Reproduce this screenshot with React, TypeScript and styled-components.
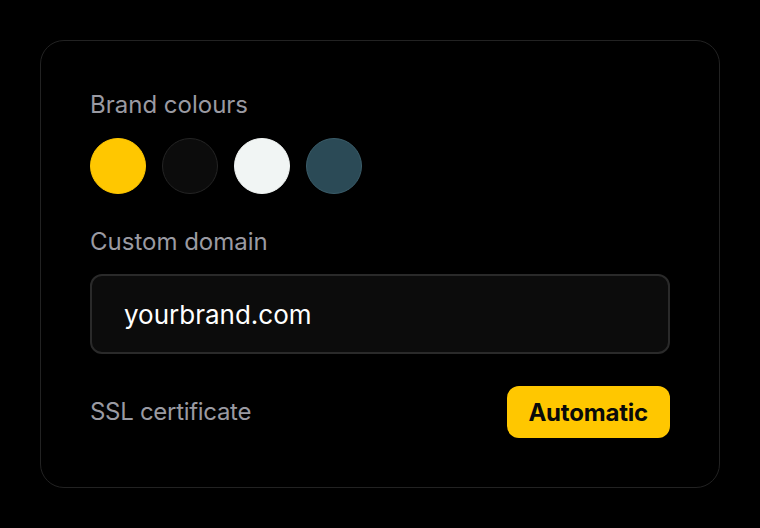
import React from 'react';
import styled, { createGlobalStyle } from 'styled-components';

const GlobalStyle = createGlobalStyle`
  html, body {
    margin: 0;
    padding: 0;
    background: #000000;
  }
  body {
    font-family: Inter, "Noto Sans", sans-serif;
    -webkit-font-smoothing: antialiased;
  }
`;

const Page = styled.div`
  width: 760px;
  height: 528px;
  box-sizing: border-box;
  padding: 40px;
  background: #000000;
`;

const Card = styled.div`
  box-sizing: border-box;
  width: 680px;
  height: 448px;
  border: 1.5px solid #222222;
  border-radius: 24px;
  padding: 50px 49px 49px;
  display: flex;
  flex-direction: column;
`;

const Label = styled.div`
  font-size: 24px;
  line-height: 28px;
  color: #9a9aa2;
`;

const Swatches = styled.div`
  display: flex;
  gap: 16px;
  margin-top: 19px;
  margin-bottom: 34px;
`;

const Swatch = styled.div<{ $fill: string; $ring: string }>`
  width: 56px;
  height: 56px;
  box-sizing: border-box;
  border-radius: 50%;
  background: ${(p) => p.$fill};
  border: 1.5px solid ${(p) => p.$ring};
`;

const Input = styled.div`
  box-sizing: border-box;
  margin-top: 18px;
  height: 80px;
  border: 2px solid #2a2a2a;
  border-radius: 12px;
  background: #0c0c0c;
  padding: 0 32px;
  display: flex;
  align-items: center;
  font-size: 26px;
  color: #ffffff;
`;

const Row = styled.div`
  margin-top: 32px;
  display: flex;
  justify-content: space-between;
  align-items: center;
`;

const SslLabel = styled(Label)`
  letter-spacing: -0.3px;
`;

const Badge = styled.div`
  height: 52px;
  box-sizing: border-box;
  padding: 0 22px 0 21px;
  border-radius: 12px;
  background: #ffc700;
  color: #0a0a0a;
  font-size: 24px;
  font-weight: 700;
  letter-spacing: -0.2px;
  display: flex;
  align-items: center;
`;

const swatches = [
  { fill: '#ffc700', ring: '#ffc700' },
  { fill: '#0c0c0c', ring: '#242424' },
  { fill: '#f1f5f4', ring: '#f1f5f4' },
  { fill: '#2b4a56', ring: '#3a5c69' },
];

export default function App() {
  return (
    <Page>
      <GlobalStyle />
      <Card>
        <Label>Brand colours</Label>
        <Swatches>
          {swatches.map((s, i) => (
            <Swatch key={i} $fill={s.fill} $ring={s.ring} />
          ))}
        </Swatches>
        <Label>Custom domain</Label>
        <Input>yourbrand.com</Input>
        <Row>
          <SslLabel>SSL certificate</SslLabel>
          <Badge>Automatic</Badge>
        </Row>
      </Card>
    </Page>
  );
}
